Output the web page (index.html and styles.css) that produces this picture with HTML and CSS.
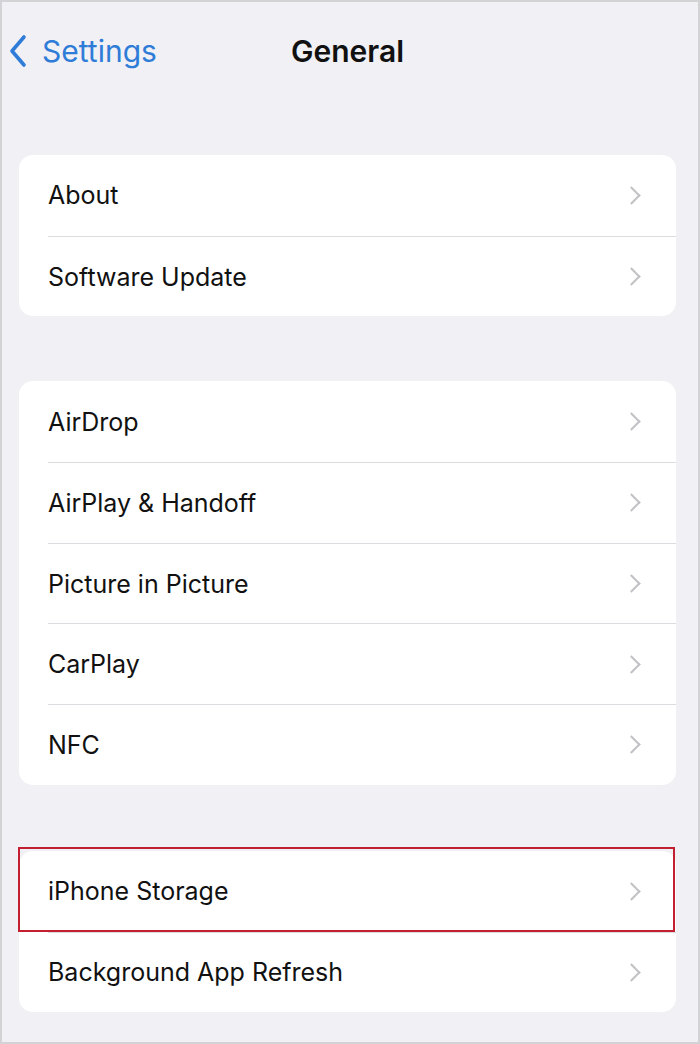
FILE: index.html
```html
<!DOCTYPE html>
<html>
<head>
    <title>General</title>
    <link rel="stylesheet" href="styles.css">
</head>
<body>
    <div class="screen">
        <div class="nav">
            <div class="back">
                <svg class="back-icon" width="20" height="34" viewBox="0 0 20 34">
                    <path d="M16 3 L4 17 L16 31" fill="none" stroke="#2f7cd8" stroke-width="3.6" stroke-linecap="round" stroke-linejoin="round"/>
                </svg>
                <span>Settings</span>
            </div>
            <div class="title">General</div>
        </div>

        <div class="group">
            <div class="row"><span>About</span><i class="chev"></i></div>
            <div class="row"><span>Software Update</span><i class="chev"></i></div>
        </div>

        <div class="group">
            <div class="row"><span>AirDrop</span><i class="chev"></i></div>
            <div class="row"><span>AirPlay &amp; Handoff</span><i class="chev"></i></div>
            <div class="row"><span>Picture in Picture</span><i class="chev"></i></div>
            <div class="row"><span>CarPlay</span><i class="chev"></i></div>
            <div class="row"><span>NFC</span><i class="chev"></i></div>
        </div>

        <div class="group last">
            <div class="row marked"><span>iPhone Storage</span><i class="chev"></i></div>
            <div class="row"><span>Background App Refresh</span><i class="chev"></i></div>
        </div>
    </div>
</body>
</html>
```

FILE: styles.css
```css
body {
    margin: 0;
    font-family: Inter, "Liberation Sans", Arial, sans-serif;
}
.screen {
    width: 700px;
    height: 1044px;
    box-sizing: border-box;
    border: 2px solid #d3d3d6;
    background-color: #f0f0f5;
    padding: 0 22px 0 17px;
    overflow: hidden;
}
.nav {
    position: relative;
    height: 98px;
    display: flex;
    align-items: center;
}
.back {
    display: flex;
    align-items: center;
    gap: 14px;
    margin-left: -11px;
    color: #2f7cd8;
    font-size: 30px;
}
.title {
    position: absolute;
    left: 0;
    right: 0;
    top: 0;
    line-height: 98px;
    text-align: center;
    font-size: 30px;
    font-weight: 600;
    color: #111;
    pointer-events: none;
}
.group {
    background-color: #fff;
    border-radius: 14px;
    margin-top: 55px;
}
.group + .group {
    margin-top: 65px;
}
.group.last {
    margin-top: 66px;
}
.row {
    position: relative;
    height: 80.7px;
    display: flex;
    align-items: center;
    justify-content: space-between;
    margin-left: 29px;
    padding-right: 34px;
    font-size: 25px;
    color: #111;
    border-top: 1px solid #dcdce0;
    box-sizing: border-box;
}
.row:first-child {
    border-top: none;
}
.chev {
    width: 11px;
    height: 11px;
    border-right: 2px solid #c2c2c6;
    border-top: 2px solid #c2c2c6;
    transform: rotate(45deg);
    margin-right: 4px;
}
.marked::after {
    content: "";
    position: absolute;
    z-index: 1;
    left: -30px;
    right: 1px;
    top: -4px;
    bottom: 0;
    border: 2px solid #c41f30;
}
```
